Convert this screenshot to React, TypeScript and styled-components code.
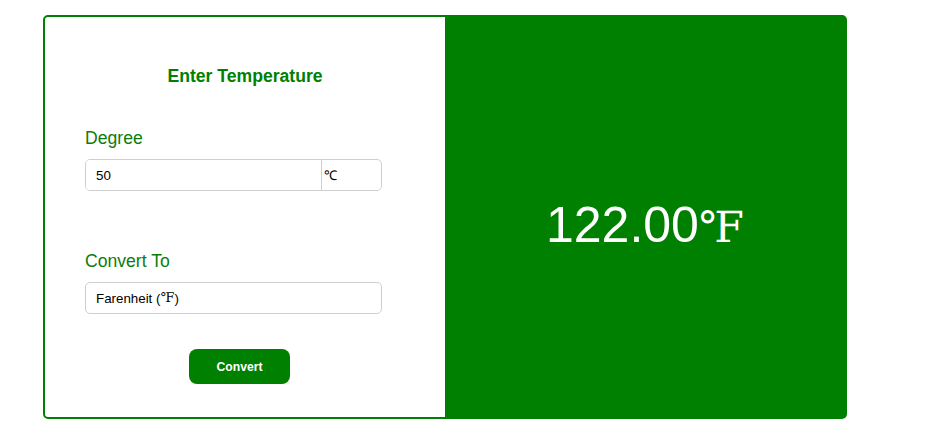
import React from "react";
import styled, { createGlobalStyle } from "styled-components";

const GlobalStyle = createGlobalStyle`
  html, body { margin: 0; padding: 0; background: #ffffff; }
  body { font-family: "Liberation Sans", Arial, sans-serif; }
`;

const Page = styled.div`
  padding: 15px 0 0 43px;
`;

const Card = styled.div`
  display: flex;
  width: 804px;
  height: 404px;
  box-sizing: border-box;
  border: 2px solid #008000;
  border-radius: 5px;
  overflow: hidden;
  background: #008000;
`;

const FormPanel = styled.div`
  width: 400px;
  flex: none;
  box-sizing: border-box;
  background: #ffffff;
  padding: 49px 40px 0 40px;
  display: flex;
  flex-direction: column;
`;

const Heading = styled.h3`
  margin: 0;
  font-size: 17.6px;
  font-weight: bold;
  color: #008000;
  text-align: center;
  line-height: normal;
`;

const Label = styled.label<{ $gap: number }>`
  display: block;
  margin-top: ${(p) => p.$gap}px;
  font-size: 17.6px;
  color: #0a7d0a;
  line-height: normal;
`;

const Group = styled.div`
  display: flex;
  width: 297px;
  height: 32px;
  margin-top: 10px;
  box-sizing: border-box;
  border: 1px solid #cfcfcf;
  border-radius: 5px;
  overflow: hidden;
`;

const Field = styled.input`
  flex: 1;
  min-width: 0;
  border: none;
  outline: none;
  padding: 0 0 0 10px;
  font-family: "Liberation Sans", Arial, sans-serif;
  font-size: 13.33px;
  color: #000;
  background: #fff;
`;

const Addon = styled.span`
  width: 60px;
  flex: none;
  display: flex;
  align-items: center;
  padding-left: 2px;
  box-sizing: border-box;
  border-left: 1px solid #cfcfcf;
  font-size: 13.33px;
  color: #000;
`;

const SelectBox = styled.div`
  display: flex;
  align-items: center;
  width: 297px;
  height: 32px;
  margin-top: 10px;
  box-sizing: border-box;
  border: 1px solid #cfcfcf;
  border-radius: 5px;
  padding-left: 10px;
  font-size: 13.33px;
  color: #000;
`;

const Unit = styled.span<{ $scale?: number }>`
  font-family: "Liberation Serif", "DejaVu Serif", serif;
  font-size: ${(p) => p.$scale ?? 1}em;
`;

const ButtonRow = styled.div`
  display: flex;
  justify-content: center;
  margin-top: 35px;
  width: 309px;
`;

const Button = styled.button`
  width: 101px;
  height: 35px;
  border: none;
  border-radius: 8px;
  background: #008000;
  color: #ffffff;
  font-family: "Liberation Sans", Arial, sans-serif;
  font-weight: bold;
  font-size: 12.2px;
  cursor: pointer;
`;

const ResultPanel = styled.div`
  flex: 1;
  box-sizing: border-box;
  padding-top: 16px;
  display: flex;
  align-items: baseline;
  justify-content: center;
  align-content: center;
  flex-wrap: wrap;
  color: #ffffff;
  font-size: 50px;
`;

export default function App() {
  return (
    <>
      <GlobalStyle />
      <Page>
        <Card>
          <FormPanel>
            <Heading>Enter Temperature</Heading>
            <Label $gap={41}>Degree</Label>
            <Group>
              <Field defaultValue="50" />
              <Addon>℃</Addon>
            </Group>
            <Label $gap={60}>Convert To</Label>
            <SelectBox>
              Farenheit (<Unit>℉</Unit>)
            </SelectBox>
            <ButtonRow>
              <Button>Convert</Button>
            </ButtonRow>
          </FormPanel>
          <ResultPanel>
            122.00<Unit $scale={0.86}>℉</Unit>
          </ResultPanel>
        </Card>
      </Page>
    </>
  );
}
